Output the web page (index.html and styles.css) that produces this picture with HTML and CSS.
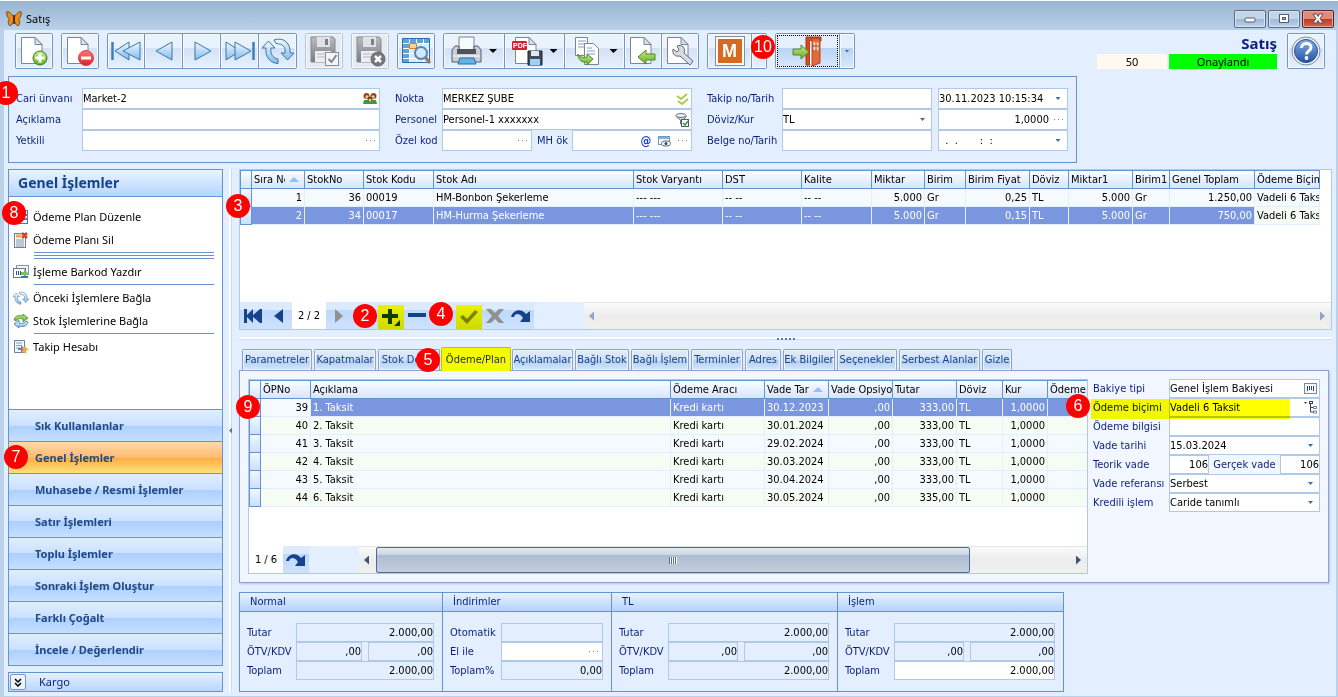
FILE: index.html
```html
<!DOCTYPE html>
<html lang="tr">
<head>
<meta charset="utf-8">
<title>Satış</title>
<link rel="stylesheet" href="styles.css">
</head>
<body>
<svg class="defs" width="0" height="0" aria-hidden="true">
  <defs>
    <linearGradient id="blue" x1="0" y1="0" x2="0" y2="1"><stop offset="0" stop-color="#f2fafe"/><stop offset="1" stop-color="#7fbce8"/></linearGradient>
    <linearGradient id="green" x1="0" y1="0" x2="0" y2="1"><stop offset="0" stop-color="#c5ec85"/><stop offset="1" stop-color="#62ad28"/></linearGradient>
    <linearGradient id="red" x1="0" y1="0" x2="0" y2="1"><stop offset="0" stop-color="#ff7a72"/><stop offset="1" stop-color="#d9202a"/></linearGradient>
    <linearGradient id="grey" x1="0" y1="0" x2="0" y2="1"><stop offset="0" stop-color="#b9bcc2"/><stop offset="1" stop-color="#777b83"/></linearGradient>
    <linearGradient id="orb" x1="0" y1="0" x2="0" y2="1"><stop offset="0" stop-color="#86aee6"/><stop offset="1" stop-color="#2452a5"/></linearGradient>
    <symbol id="page" viewBox="0 0 32 32"><path d="M3.500 2.500H17l7 7v19H3.500z" fill="#fff" stroke="#7d8592"/><path d="M17 2.500v7h7z" fill="#cfe4f8" stroke="#7d8592"/></symbol>
    <symbol id="cycle" viewBox="0 0 32 32"><path d="M4 13H0l6.500-7L13 13H9c-1 6 2 10 7 11v4.500C8 28 3 22 4 13z" fill="url(#blue)" stroke="#3b74ad"/><path d="M28 18h4l-6.500 7L19 18h4c1-6-2-9-9-9.500l-2-3.500C22 1.500 29 9 28 18z" fill="url(#blue)" stroke="#3b74ad"/></symbol>
    <symbol id="floppy" viewBox="0 0 32 32"><path d="M3 2h22l2 2v23H3z" fill="url(#grey)" stroke="#85888e"/><path d="M9 2h13v10H9z" fill="#dfe1e5"/><path d="M17 4h3v6h-3z" fill="#7c8087"/><path d="M7 16h16v11H7z" fill="#eceef1"/><path d="M9 19h12M9 22h12" stroke="#b4b7bd"/></symbol>
    <symbol id="redo" viewBox="0 0 20 16"><path d="M0 9C2 1 11 0 15 6l4-3v11H9l3-4C9 5 4 5 3 9z" fill="#15428b"/></symbol>
  </defs>
</svg>
<div class="window">
  <header class="titlebar">
    <svg class="app-icon" viewBox="0 0 16 16" width="16" height="16" aria-hidden="true"><path d="M7.500 6C5 1 1.500 0 .7 1c0 3 .8 6 2.800 7C1.500 10 2 13 4 15c2-1 3-3 3.500-5z" fill="#ef8d10" stroke="#593010" stroke-width=".8"/><path d="M8.500 6C11 1 14.500 0 15.300 1c0 3-.8 6-2.800 7 2 2 1.500 5-.5 7-2-1-3-3-3.500-5z" fill="#ef8d10" stroke="#593010" stroke-width=".8"/><path d="M8 4v9" stroke="#402010" stroke-width="1.500"/></svg>
    <h1>Satış</h1>
    <div class="window-controls">
      <button aria-label="Küçült"><svg width="14" height="12"><rect x="2" y="5" width="10" height="4" rx="1" fill="#fff" stroke="#555c6b"/></svg></button>
      <button aria-label="Ekranı kapla"><svg width="14" height="12"><rect x="2.500" y="1.500" width="9" height="8" fill="#fff" stroke="#555c6b"/><rect x="5.500" y="4.500" width="3" height="2" fill="#9db6d2" stroke="#555c6b"/></svg></button>
      <button class="close" aria-label="Kapat"><svg width="14" height="12"><path d="M2 1h3.500L7 3.500 8.500 1H12L9 5.500l3 4.500H8.500L7 7.500 5.500 10H2l3-4.500z" fill="#fff" stroke="#5c4a54"/></svg></button>
    </div>
  </header>

  <div class="client">
    <div class="toolbar">
      <div class="group"><button class="tool" aria-label="Yeni"><svg width="32" height="32"><use href="#page"/><circle cx="22" cy="23" r="7" fill="url(#green)" stroke="#3d7d1b"/><path d="M22 18.500v9M17.500 23h9" stroke="#fff" stroke-width="3"/></svg></button></div>
      <div class="group"><button class="tool" aria-label="Sil"><svg width="32" height="32"><use href="#page"/><circle cx="22" cy="23" r="7.500" fill="url(#red)" stroke="#e04040"/><path d="M17 23h10" stroke="#fff" stroke-width="3"/></svg></button></div>
      <div class="group">
        <button class="tool" aria-label="İlk kayıt"><svg width="32" height="32"><path d="M2.500 7v18" stroke="#3f7fb8" stroke-width="2.500"/><path d="M19 7v18L5 16z" fill="url(#blue)" stroke="#3b74ad"/><path d="M30 7v18L13 16z" fill="url(#blue)" stroke="#3b74ad"/></svg></button>
        <button class="tool" aria-label="Önceki kayıt"><svg width="32" height="32"><path d="M24 7v18L8 16z" fill="url(#blue)" stroke="#3b74ad"/></svg></button>
        <button class="tool" aria-label="Sonraki kayıt"><svg width="32" height="32"><path d="M9 7v18l16-9z" fill="url(#blue)" stroke="#3b74ad"/></svg></button>
        <button class="tool" aria-label="Son kayıt"><svg width="32" height="32"><path d="M29.500 7v18" stroke="#3f7fb8" stroke-width="2.500"/><path d="M2 7v18l14-9z" fill="url(#blue)" stroke="#3b74ad"/><path d="M11 7v18l16-9z" fill="url(#blue)" stroke="#3b74ad"/></svg></button>
        <button class="tool" aria-label="Yenile"><svg width="32" height="32"><use href="#cycle"/></svg></button>
      </div>
      <div class="group"><button class="tool off" aria-label="Kaydet"><svg width="32" height="32"><use href="#floppy"/><rect x="17.500" y="17.500" width="13" height="13" fill="#f3f4f6" stroke="#8b8e94"/><path d="M20.500 24l3 3 5-7" fill="none" stroke="#85888e" stroke-width="2"/></svg></button></div>
      <div class="group"><button class="tool off" aria-label="Vazgeç"><svg width="32" height="32"><use href="#floppy"/><circle cx="24" cy="24" r="7" fill="#73767c" stroke="#666a70"/><path d="M21 21l6 6M27 21l-6 6" stroke="#fff" stroke-width="2.500"/></svg></button></div>
      <div class="group"><button class="tool" aria-label="Ara"><svg width="32" height="32"><path d="M2.500 3.500h27v24h-27z" fill="#d5ebfb" stroke="#2d6da9"/><path d="M3 4h6v23H3zM3 4h26v4H3z" fill="#5fa3da"/><path d="M9.500 4v23M16.500 4v23M23.500 4v23M3 8.500h26M3 13.500h26M3 18.500h26M3 23.500h26" stroke="#fff"/><path d="M9.500 8.500h7v5h-7z" fill="#ffd58a" stroke="#c8872e"/><path d="M25 22l5 6" stroke="#a3755a" stroke-width="3"/><circle cx="21" cy="18" r="6" fill="#cfe8fb" stroke="#5b83b5" stroke-width="2"/></svg></button></div>
      <div class="group">
        <button class="tool drop" aria-label="Yazdır"><svg width="32" height="32"><path d="M8 2h15v14H8z" fill="#f7fafd" stroke="#7b8594"/><path d="M4 11h4v5h15v-5h4l3 4v12H1V15z" fill="#c9ced6" stroke="#565c68"/><path d="M6 14h19v5H6z" fill="#4d535d"/><path d="M2 21h27" stroke="#fff"/><path d="M9 23h14l2 6H7z" fill="#62b2ea" stroke="#2b6f9f"/></svg></button>
        <button class="tool drop" aria-label="PDF olarak kaydet"><svg width="32" height="32"><use href="#page"/><rect x="0" y="6" width="15" height="9" rx="1" fill="#cf2430"/><text x="1" y="13" class="pdf">PDF</text><path d="M16 16h14v14H16z" fill="#454a58" stroke="#1c2130"/><path d="M19 16h8v5h-8z" fill="#dfe8f4"/><path d="M18 24h10v6H18z" fill="#9dd0f5"/></svg></button>
        <button class="tool drop" aria-label="Kopyala"><svg width="32" height="32"><path d="M3.500 2.500h12v18h-12z" fill="#fff" stroke="#7d8592"/><path d="M6 6h8M6 9h8M6 12h8" stroke="#7a9fd0"/><path d="M12.500 8.500h9l5 5v16h-14z" fill="#fff" stroke="#7d8592"/><path d="M15 13h5M15 16h8M15 19h8" stroke="#7a9fd0"/><path d="M6 19c2 4 6 4 9 3v-3l6 5-6 6v-3c-5 1-9-2-9-8z" fill="url(#green)" stroke="#4c8b1d"/></svg></button>
        <button class="tool" aria-label="Aktar"><svg width="32" height="32"><use href="#page"/><path d="M11 22l8-7v4h9v6h-9v4z" fill="url(#green)" stroke="#4c8b1d"/></svg></button>
        <button class="tool" aria-label="Ayarlar"><svg width="32" height="32"><use href="#page"/><path d="M9 14l4 3 2-2-2-4c5-2 9 2 7 7l9 8-3 4-10-9c-5 1-8-2-7-7z" fill="#d6dce5" stroke="#5e6672"/></svg></button>
      </div>
      <div class="group module">
        <button class="tool wide" aria-label="Modül"><svg width="32" height="32"><rect x="1.500" y="1.500" width="29" height="29" fill="#fff" stroke="#8c8c8c"/><rect x="4" y="4" width="24" height="24" fill="#d9691f"/><text x="8" y="22" class="m">M</text></svg></button>
        <button class="slim" aria-label="Modül seçenekleri"></button>
        <span class="badge b10">10</span>
      </div>
      <div class="group exit">
        <button class="tool" aria-label="Çıkış"><svg width="32" height="32"><path d="M14 2h15v4H18v24h-4z" fill="#d94a20" stroke="#a03414"/><path d="M18 6h4v22l-4 2z" fill="#fff"/><path d="M20 3l8 1v24l-8 3z" fill="#e06a3c" stroke="#b2421d"/><path d="M21.500 7l5 .5v8l-5-.5z" fill="#f8e2cb"/><path d="M24 7v9M21 11h6" stroke="#b2421d"/><path d="M1 14h8v-4l8 7-8 7v-4H1z" fill="url(#green)" stroke="#55852c"/></svg></button>
        <button class="slim caret" aria-label="Çıkış seçenekleri"></button>
      </div>
      <div class="status">
        <strong>Satış</strong>
        <div class="state"><span class="code">50</span><span class="ok">Onaylandı</span></div>
      </div>
      <div class="group"><button class="tool" aria-label="Yardım"><svg width="32" height="32"><circle cx="16" cy="16" r="14" fill="#edf3fb" stroke="#7c8ba6"/><circle cx="16" cy="16" r="11.500" fill="url(#orb)" stroke="#254f96"/><path d="M11.500 13c0-6 9.500-6 9.500-.5 0 3.500-4.500 3.500-4.500 7" fill="none" stroke="#fff" stroke-width="3"/><circle cx="16.500" cy="23" r="1.900" fill="#fff"/></svg></button></div>
    </div>

    <form class="head-form">
      <span class="badge b1">1</span>
      <div class="block account">
        <label for="cari">Cari ünvanı</label>
        <div class="field"><input id="cari" value="Market-2"><button type="button" aria-label="Cari seç"><svg width="14" height="13"><path d="M0 12l1-4h12l1 4z" fill="#3f9a3a"/><circle cx="3.500" cy="4" r="3" fill="#8a4a1f"/><circle cx="10.500" cy="4" r="3" fill="#8a4a1f"/><circle cx="4" cy="5" r="1.700" fill="#f3c79b"/><circle cx="10" cy="5" r="1.700" fill="#f3c79b"/><circle cx="7" cy="7" r="2.500" fill="#713a17"/><circle cx="7" cy="8" r="1.500" fill="#f3c79b"/></svg></button></div>
        <label for="aciklama">Açıklama</label>
        <div class="field"><input id="aciklama"></div>
        <label for="yetkili">Yetkili</label>
        <div class="field"><input id="yetkili"><button type="button" class="dots" aria-label="Yetkili seç"></button></div>
      </div>
      <div class="block place">
        <label for="nokta">Nokta</label>
        <div class="field"><input id="nokta" value="MERKEZ ŞUBE"><button type="button" aria-label="Nokta seç"><svg width="13" height="14"><path d="M1 4l4 3 6-5M2 9l4 3 6-5" fill="none" stroke="#a7cf4b" stroke-width="2"/></svg></button></div>
        <label for="personel">Personel</label>
        <div class="field"><input id="personel" value="Personel-1 xxxxxxx"><button type="button" aria-label="Personel seç"><svg width="14" height="14"><path d="M.5 3l5 4v4l3 1V7l3-4" fill="#d4d8de" stroke="#6b717c"/><ellipse cx="6" cy="2.500" rx="5" ry="2" fill="#eef0f3" stroke="#6b717c"/><rect x="6.500" y="6.500" width="7" height="7" fill="#fff" stroke="#4e5a6d"/><path d="M8 10l2 2 3-4" fill="none" stroke="#35a035" stroke-width="1.500"/></svg></button></div>
        <label for="ozel">Özel kod</label>
        <div class="split">
          <div class="field"><input id="ozel"><button type="button" class="dots" aria-label="Özel kod seç"></button></div>
          <label for="mh">MH ök</label>
          <div class="field grow"><input id="mh"><button type="button" class="at" aria-label="E-posta">@</button><button type="button" aria-label="Göster"><svg width="13" height="12"><rect x=".5" y="1.500" width="11" height="8" fill="#f1f7fd" stroke="#7595bd"/><path d="M1 2h10v2H1z" fill="#7fb2e4"/><ellipse cx="8" cy="8.500" rx="4.500" ry="2.500" fill="#fff" stroke="#5b6475"/><circle cx="8" cy="8.500" r="1.500" fill="#38445c"/></svg></button><button type="button" class="dots" aria-label="MH ök seç"></button></div>
        </div>
      </div>
      <div class="block doc">
        <label for="takip">Takip no/Tarih</label>
        <div class="field"><input id="takip"></div>
        <div class="field"><input id="tarih" aria-label="Tarih" value="30.11.2023 10:15:34"><button type="button" class="caret" aria-label="Tarih seç"></button></div>
        <label for="doviz">Döviz/Kur</label>
        <div class="field caret"><select id="doviz"><option>TL</option></select></div>
        <div class="field num"><input id="kur" aria-label="Kur" value="1,0000"><button type="button" class="dots" aria-label="Kur seç"></button></div>
        <label for="belge">Belge no/Tarih</label>
        <div class="field"><input id="belge"></div>
        <div class="field"><input id="belge-tarih" aria-label="Belge tarihi" value="  .  .       :  :"><button type="button" class="caret" aria-label="Belge tarihi seç"></button></div>
      </div>
    </form>

    <div class="workspace">
      <aside class="sidebar">
        <div class="nav-panel">
          <h2>Genel İşlemler</h2>
          <span class="badge b8">8</span>
          <div class="links">
            <a href="#"><svg width="16" height="16"><rect x="1.500" y="1.500" width="13" height="13" fill="#eef5fd" stroke="#5278a8"/><path d="M2 6h12M2 10h12" stroke="#4a80c4" stroke-width="2"/></svg>Ödeme Plan Düzenle</a>
            <a href="#"><svg width="16" height="16"><rect x="1.500" y="1.500" width="11" height="14" fill="#f5f8fc" stroke="#6c7fa0"/><path d="M3 4h5" stroke="#f3a64d" stroke-width="3"/><path d="M3 8h8M3 10h8M3 12h8M3 14h8" stroke="#8794ab"/><path d="M9 1l5 5M14 1l-5 5" stroke="#d0462c" stroke-width="2.500"/></svg>Ödeme Planı Sil</a>
            <hr class="double">
            <a href="#"><svg width="16" height="16"><rect x="3.500" y="1.500" width="12" height="9" fill="#f3f7fc" stroke="#8596b4"/><rect x=".5" y="4.500" width="12" height="9" fill="#fff" stroke="#6178a0"/><path d="M3.500 7v4M5.500 7v4M7.500 7v4" stroke="#334f80"/><path d="M8 8h3V5l4 4-4 5v-3H8z" fill="#7cc14e"/><path d="M8 13h7" stroke="#3974bd" stroke-width="2"/></svg>İşleme Barkod Yazdır</a>
            <hr>
            <a href="#"><svg width="16" height="16"><use href="#cycle"/></svg>Önceki İşlemlere Bağla</a>
            <a href="#"><svg width="16" height="16"><path d="M1 7c1-5 6-5 9-4V1l5 4-5 4V6C6 5 4 6 3 8z" fill="url(#green)" stroke="#4a8a2a" stroke-width=".8"/><path d="M15 9c-1 5-6 5-9 4v2l-5-4 5-4v3c4 1 6 0 7-2z" fill="url(#blue)" stroke="#3b74ad" stroke-width=".8"/></svg>Stok İşlemlerine Bağla</a>
            <hr>
            <a href="#"><svg width="16" height="16"><path d="M1.500 1.500h10v12h-10z" fill="#f3f7fc" stroke="#6c7fa0"/><path d="M3 4h6M3 6.500h6M3 9h4" stroke="#7ea2d2"/><path d="M5 9h3V6l4 4-4 4v-3H5z" fill="#6d7f9b"/><path d="M12 6l1 3 3 1-3 2 1 3-3-2-2 2 1-4-1-2h2z" fill="#f6aa3c"/></svg>Takip Hesabı</a>
          </div>
          <nav>
            <button>Sık Kullanılanlar</button>
            <button class="active">Genel İşlemler<span class="badge b7">7</span></button>
            <button>Muhasebe / Resmi İşlemler</button>
            <button>Satır İşlemleri</button>
            <button>Toplu İşlemler</button>
            <button>Sonraki İşlem Oluştur</button>
            <button>Farklı Çoğalt</button>
            <button>İncele / Değerlendir</button>
          </nav>
        </div>
        <div class="cargo"><button aria-label="Kargo panelini aç"><svg width="8" height="9"><path d="M1 1l3 3 3-3M1 5l3 3 3-3" fill="none" stroke="#000" stroke-width="1.500"/></svg></button>Kargo</div>
      </aside>
      <div class="v-split"></div>

      <main>
        <section class="grid stock">
          <span class="badge b3">3</span>
          <div class="grid-body">
            <table>
              <colgroup><col><col><col><col><col><col><col><col><col><col><col><col><col><col><col><col></colgroup>
              <thead><tr><th></th><th><div class="sort"><span>Sıra No</span></div></th><th>StokNo</th><th>Stok Kodu</th><th>Stok Adı</th><th>Stok Varyantı</th><th>DST</th><th>Kalite</th><th>Miktar</th><th>Birim</th><th>Birim Fiyat</th><th>Döviz</th><th>Miktar1</th><th>Birim1</th><th>Genel Toplam</th><th>Ödeme Biçimi</th></tr></thead>
              <tbody>
                <tr><td></td><td class="r">1</td><td class="r">36</td><td>00019</td><td>HM-Bonbon Şekerleme</td><td>--- ---</td><td>-- --</td><td>-- --</td><td class="r">5.000</td><td>Gr</td><td class="r">0,25</td><td>TL</td><td class="r">5.000</td><td>Gr</td><td class="r">1.250,00</td><td>Vadeli 6 Taksit</td></tr>
                <tr class="sel"><td></td><td class="r">2</td><td class="r">34</td><td>00017</td><td>HM-Hurma Şekerleme</td><td>--- ---</td><td>-- --</td><td>-- --</td><td class="r">5.000</td><td>Gr</td><td class="r">0,15</td><td>TL</td><td class="r">5.000</td><td>Gr</td><td class="r">750,00</td><td class="focus">Vadeli 6 Taksit</td></tr>
              </tbody>
            </table>
          </div>
          <div class="navigator">
            <button aria-label="İlk"><svg width="20" height="16"><path d="M1 1h3v6l6-6v6l7-6h2v14h-2l-7-6v6L4 9v6H1z" fill="#15428b"/></svg></button>
            <button aria-label="Önceki"><svg width="20" height="16"><path d="M14 1v14L5 8z" fill="#15428b"/></svg></button>
            <span class="count">2 / 2</span>
            <button aria-label="Sonraki"><svg width="20" height="16"><path d="M6 1v14l8-7z" fill="#8f9192"/></svg></button>
            <span class="gap"></span>
            <button class="mark" aria-label="Ekle"><svg width="20" height="18"><path d="M7 1h4v5h6v4h-6v6H7v-6H1V6h6zM19 12v6h-6z" fill="#15428b"/></svg></button>
            <button aria-label="Çıkar"><svg width="20" height="16"><path d="M1 5h18v4H1z" fill="#15428b"/></svg></button>
            <span class="gap"></span>
            <button class="mark" aria-label="Onayla"><svg width="20" height="16"><path d="M1 8l3-2 4 4 8-9 3 2L8 15z" fill="#8f9192"/></svg></button>
            <button aria-label="Vazgeç"><svg width="20" height="16"><path d="M1 1h5l4 4 4-4h5l-6 7 6 7h-5l-4-4-4 4H1l6-7z" fill="#8f9192"/></svg></button>
            <button aria-label="Yenile"><svg width="20" height="16"><use href="#redo"/></svg></button>
            <span class="badge b2">2</span><span class="badge b4">4</span>
            <div class="scroll idle"><i class="arrow left"></i><i class="arrow right"></i></div>
          </div>
        </section>
        <div class="h-split"></div>

        <div class="tabs" role="tablist">
          <button role="tab">Parametreler</button><button role="tab">Kapatmalar</button><button role="tab">Stok Detay</button><button role="tab" class="active" aria-selected="true">Ödeme/Plan<span class="badge b5">5</span></button><button role="tab">Açıklamalar</button><button role="tab">Bağlı Stok</button><button role="tab">Bağlı İşlem</button><button role="tab">Terminler</button><button role="tab">Adres</button><button role="tab">Ek Bilgiler</button><button role="tab">Seçenekler</button><button role="tab">Serbest Alanlar</button><button role="tab">Gizle</button>
        </div>
        <section class="tab-page">
          <div class="grid plan">
            <span class="badge b9">9</span>
            <div class="grid-body">
              <table>
                <colgroup><col><col><col><col><col><col><col><col><col><col></colgroup>
                <thead><tr><th></th><th>ÖPNo</th><th>Açıklama</th><th>Ödeme Aracı</th><th><div class="sort"><span>Vade Tarihi</span></div></th><th>Vade Opsiyonu</th><th>Tutar</th><th>Döviz</th><th>Kur</th><th>Ödeme Tipi</th></tr></thead>
                <tbody>
                  <tr class="sel"><td></td><td class="r focus">39</td><td>1. Taksit</td><td>Kredi kartı</td><td>30.12.2023</td><td class="r">,00</td><td class="r">333,00</td><td>TL</td><td class="r">1,0000</td><td></td></tr>
                  <tr><td></td><td class="r">40</td><td>2. Taksit</td><td>Kredi kartı</td><td>30.01.2024</td><td class="r">,00</td><td class="r">333,00</td><td>TL</td><td class="r">1,0000</td><td></td></tr>
                  <tr><td></td><td class="r">41</td><td>3. Taksit</td><td>Kredi kartı</td><td>29.02.2024</td><td class="r">,00</td><td class="r">333,00</td><td>TL</td><td class="r">1,0000</td><td></td></tr>
                  <tr><td></td><td class="r">42</td><td>4. Taksit</td><td>Kredi kartı</td><td>30.03.2024</td><td class="r">,00</td><td class="r">333,00</td><td>TL</td><td class="r">1,0000</td><td></td></tr>
                  <tr><td></td><td class="r">43</td><td>5. Taksit</td><td>Kredi kartı</td><td>30.04.2024</td><td class="r">,00</td><td class="r">333,00</td><td>TL</td><td class="r">1,0000</td><td></td></tr>
                  <tr><td></td><td class="r">44</td><td>6. Taksit</td><td>Kredi kartı</td><td>30.05.2024</td><td class="r">,00</td><td class="r">335,00</td><td>TL</td><td class="r">1,0000</td><td></td></tr>
                </tbody>
              </table>
            </div>
            <div class="navigator">
              <span class="count">1 / 6</span>
              <button aria-label="Yenile"><svg width="20" height="16"><use href="#redo"/></svg></button>
              <div class="scroll"><i class="arrow left"></i><div class="thumb"></div><i class="arrow right"></i></div>
            </div>
          </div>
          <form class="pay-form">
            <span class="badge b6">6</span>
            <label for="bakiye">Bakiye tipi</label>
            <div class="field"><input id="bakiye" value="Genel İşlem Bakiyesi"><button type="button" aria-label="Bakiye seç"><svg width="13" height="11"><rect x=".5" y=".5" width="12" height="10" fill="#f7f9fd" stroke="#7388b5"/><path d="M3.500 3v5M5.500 3v4M7.500 3v4M9.500 3v5" stroke="#33415f"/></svg></button></div>
            <label for="bicim">Ödeme biçimi</label>
            <div class="field"><input id="bicim" value="Vadeli 6 Taksit"><button type="button" aria-label="Biçim seç"><svg width="14" height="13"><path d="M0 1h3L1.500 3z" fill="#33415f"/><path d="M6.500 2v9h3M6.500 6.500h3" fill="none" stroke="#33415f"/><rect x="5.500" y=".5" width="3" height="2" fill="#fff" stroke="#33415f"/><rect x="9.500" y="5.500" width="3" height="2" fill="#fff" stroke="#7b86a0"/><rect x="9.500" y="10" width="3" height="2" fill="#fff" stroke="#7b86a0"/></svg></button></div>
            <label for="bilgi">Ödeme bilgisi</label>
            <div class="field"><input id="bilgi"></div>
            <label for="vade">Vade tarihi</label>
            <div class="field"><input id="vade" value="15.03.2024"><button type="button" class="caret" aria-label="Vade seç"></button></div>
            <label for="teorik">Teorik vade</label>
            <div class="split">
              <div class="field num"><input id="teorik" value="106"></div>
              <label for="gercek">Gerçek vade</label>
              <div class="field num"><input id="gercek" value="106"></div>
            </div>
            <label for="referans">Vade referansı</label>
            <div class="field caret"><select id="referans"><option>Serbest</option></select></div>
            <label for="kredili">Kredili işlem</label>
            <div class="field caret"><select id="kredili"><option>Caride tanımlı</option></select></div>
            <div class="marker"></div>
          </form>
        </section>

        <section class="totals">
          <fieldset class="t1"><legend>Normal</legend><div class="rows">
            <label for="n1">Tutar</label><div class="field ro num"><input id="n1" readonly value="2.000,00"></div>
            <label for="n2">ÖTV/KDV</label><div class="pair"><div class="field ro num"><input id="n2" readonly value=",00"></div><div class="field ro num"><input aria-label="KDV" readonly value=",00"></div></div>
            <label for="n3">Toplam</label><div class="field ro num"><input id="n3" readonly value="2.000,00"></div></div>
          </fieldset>
          <fieldset class="t2"><legend>İndirimler</legend><div class="rows">
            <label for="i1">Otomatik</label><div class="field ro num"><input id="i1" readonly></div>
            <label for="i2">El ile</label><div class="field num"><input id="i2"><button type="button" class="dots" aria-label="İndirim seç"></button></div>
            <label for="i3">Toplam%</label><div class="field ro num"><input id="i3" readonly value="0,00"></div></div>
          </fieldset>
          <fieldset class="t3"><legend>TL</legend><div class="rows">
            <label for="l1">Tutar</label><div class="field ro num"><input id="l1" readonly value="2.000,00"></div>
            <label for="l2">ÖTV/KDV</label><div class="pair"><div class="field ro num"><input id="l2" readonly value=",00"></div><div class="field ro num"><input aria-label="KDV" readonly value=",00"></div></div>
            <label for="l3">Toplam</label><div class="field ro num"><input id="l3" readonly value="2.000,00"></div></div>
          </fieldset>
          <fieldset class="t3"><legend>İşlem</legend><div class="rows">
            <label for="s1">Tutar</label><div class="field ro num"><input id="s1" readonly value="2.000,00"></div>
            <label for="s2">ÖTV/KDV</label><div class="pair"><div class="field ro num"><input id="s2" readonly value=",00"></div><div class="field ro num"><input aria-label="KDV" readonly value=",00"></div></div>
            <label for="s3">Toplam</label><div class="field num"><input id="s3" value="2.000,00"></div></div>
          </fieldset>
        </section>
      </main>
    </div>
  </div>
</div>
</body>
</html>
```
FILE: styles.css
```css
:root {
  --line: #6593cf;
  --soft: #b1c9e8;
  --bg: #e3efff;
  --navy: #0b1f7c;
  --ui: "DejaVu Sans Condensed", "Noto Sans", sans-serif;
  --segoe: "Noto Sans", "Open Sans", sans-serif;
}
* { box-sizing: border-box; }
body { margin: 0; font: 11px/14px var(--ui); color: #000; background: #b9d1ea; }
button, input, select { font: inherit; color: inherit; margin: 0; padding: 0; border: 0; background: none; min-width: 0; }
button { display: flex; align-items: center; justify-content: center; }
.defs { position: absolute; }

.window { min-height: 100vh; display: flex; flex-direction: column; border-top: 1px solid #fff; padding: 0 2px 1px 4px; background: linear-gradient(#98b4d0, #b9d1ea 29px); }
.titlebar { height: 29px; display: flex; align-items: center; gap: 4px; padding: 7px 2px 0; }
.titlebar h1 { flex: 1; margin: 0; font: 11px/16px var(--segoe); }
.window-controls { display: flex; gap: 2px; }
.window-controls button { width: 32px; height: 18px; border: 1px solid #5b6b82; border-radius: 2px; box-shadow: inset 0 0 0 1px #d5e4f3; background: linear-gradient(#c3d5e8 50%, #9db8d6 50%, #bcd2e8); }
.window-controls .close { border-color: #5a2222; box-shadow: inset 0 0 0 1px #e8a79b; background: linear-gradient(#dd8b7c 50%, #b93a22 50%, #cf6a4c); }

.client { flex: 1; display: flex; flex-direction: column; background: var(--bg); padding: 3px 4px 4px; }
.toolbar { display: flex; gap: 8px; padding: 0 7px; }
.group { display: flex; position: relative; border: 1px solid #7795c0; border-radius: 2px; height: 36px; }
.group button { height: 34px; background: linear-gradient(#eaf2fd 40%, #d2e1f5 40%, #e6f0fc); box-shadow: inset 0 0 0 1px #f4f9ff; }
.group button + button { border-left: 1px solid #7795c0; }
.tool { width: 36px; }
.tool + .tool { width: 38px; }
.drop + .tool, .drop + .tool + .tool { width: 37px; }
.group .tool.off { background: #e5ebf3; }
.group:has(.off) { border-color: #b8c4d4; }
.group .tool.drop { width: 60px; gap: 6px; }
.tool.drop::after { content: ""; width: 8px; height: 4px; background: #000; clip-path: polygon(0 0, 100% 0, 50% 100%); }
.wide { width: 43px; }
.slim { width: 15px; }
.exit button { background: linear-gradient(#e5effc 40%, #b9d3f2 40%, #d8e9fc); }
.exit .tool { width: 63px; outline: 1px dotted #000; outline-offset: -2px; }
.pdf { font: bold 7px "Liberation Sans", sans-serif; fill: #fff; }
.m { font: bold 18px "Liberation Sans", sans-serif; fill: #fff; }
.status { flex: 1; display: flex; flex-direction: column; align-items: flex-end; font-family: var(--segoe); margin-right: 2px; }
.status strong { font-size: 15px; line-height: 21px; color: #0b1f7c; }
.state { display: flex; gap: 2px; text-align: center; line-height: 15px; }
.code { width: 70px; background: #fff9f0; }
.ok { width: 108px; background: #0f0; }

.caret::after { content: ""; width: 5px; height: 3px; background: #3f6ba5; clip-path: polygon(0 0, 100% 0, 50% 100%); }
.dots::after { content: ""; width: 9px; height: 1px; background: repeating-linear-gradient(90deg, #6d84a8 0 1px, transparent 1px 4px); }

.head-form { position: relative; align-self: flex-start; display: flex; gap: 15px; margin-top: 7px; padding: 11px 8px 11px 7px; border: 1px solid var(--line); }
.block { display: grid; grid-auto-rows: 21px; align-items: stretch; }
.account { grid-template-columns: 66px 298px; }
.place { grid-template-columns: 47px 250px; }
.doc { grid-template-columns: 75px 150px 6px 130px; }
.doc > :nth-child(3n) { grid-column: 4; }
label { color: var(--navy); align-self: center; white-space: nowrap; }
.field { display: flex; align-items: center; min-width: 0; border: 1px solid var(--soft); background: #fff; }
.field input, .field select { flex: 1; width: 0; height: 100%; appearance: none; outline: 0; white-space: pre; }
.field button { height: 100%; width: 18px; flex: none; }
.field.caret::after { margin-right: 6px; }
.num input { text-align: right; }
.split { display: flex; min-width: 0; }
.place .split .field { width: 90px; }
.place .split label { width: 40px; padding-left: 5px; }
.place .split .grow { width: auto; flex: 1; }
.field .at { color: #1c3fd4; font-weight: bold; font-size: 12px; }

.workspace { flex: 1; display: flex; margin-top: 6px; }
.sidebar { width: 215px; display: flex; flex-direction: column; gap: 6px; font-family: var(--segoe); }
.nav-panel { flex: 1; position: relative; display: flex; flex-direction: column; border: 1px solid var(--line); background: #fff; }
.nav-panel h2 { margin: 0; padding: 0 9px; font-size: 14px; line-height: 26px; color: #15428b; background: linear-gradient(#eaf3ff, #b5d6ff); border-bottom: 1px solid var(--line); }
.links { flex: 1; display: flex; flex-direction: column; padding: 8px 8px 8px 4px; }
.links a { display: flex; align-items: center; gap: 4px; height: 23px; color: #000; text-decoration: none; white-space: nowrap; }
.links hr { width: 180px; margin: 1px 0 1px 21px; border: 0; border-top: 1px solid var(--line); height: 1px; }
.links .double { height: 7px; margin-top: 1px; border-bottom: 1px solid var(--line); background: linear-gradient(transparent 2px, var(--line) 2px 3px, transparent 3px); }
nav { display: flex; flex-direction: column; }
nav button { position: relative; height: 32px; justify-content: flex-start; padding-left: 26px; font-weight: bold; color: #1e4a87; border-top: 1px solid var(--line); background: linear-gradient(#e0eeff, #cbe1ff 50%, #adceff 50%, #c4dfff); }
nav .active { background: linear-gradient(#ffd9aa, #ffbb6e 50%, #ffab3f 50%, #fee17a); }
.cargo { display: flex; align-items: center; gap: 13px; height: 20px; border: 1px solid var(--line); padding-left: 1px; color: var(--navy); background: linear-gradient(#e7f1ff, #b7d6ff); }
.cargo button { width: 16px; height: 16px; border: 1px solid #7795c0; border-radius: 2px; background: #edf4fd; }
.v-split { width: 16px; display: flex; align-items: center; background: linear-gradient(90deg, transparent 6px, #fff 6px 8px, #c3dbf9 8px 9px, transparent 9px); }
.v-split::after { content: ""; width: 3px; height: 6px; margin-left: 6px; background: #4c7cb8; clip-path: polygon(100% 0, 100% 100%, 0 50%); }
main { flex: 1; min-width: 0; display: flex; flex-direction: column; }

.grid { position: relative; display: flex; flex-direction: column; border: 1px solid var(--soft); background: #fff; }
.stock { flex: 1; }
.grid-body { flex: 1; overflow: hidden; }
table { table-layout: fixed; border-collapse: separate; border-spacing: 0; }
.stock table { width: 1080px; }
.plan table { width: 869px; }
th, td { height: 18px; padding: 0 2px; overflow: hidden; white-space: nowrap; text-align: left; font-weight: normal; border-right: 1px solid var(--bg); border-bottom: 1px solid var(--bg); line-height: 15px; }
th { height: 19px; border-color: var(--line); border-top: 1px solid var(--line); background: linear-gradient(#fafcff, #d5e6ff); }
th:first-child, tbody td:first-child { border-left: 1px solid var(--line); }
tbody tr td { background: #f5faff; }
tbody tr:nth-child(even) td { background: #f5fcf3; }
tbody tr td:first-child, tbody tr:nth-child(even) td:first-child { background: linear-gradient(#f2f7ff, #c9dffd); border-color: var(--line); }
tbody tr.sel td:not(.focus, :first-child) { background: #7a96df; color: #fff; }
.r { text-align: right; }
.sort { display: flex; align-items: center; justify-content: space-between; gap: 4px; padding-right: 3px; }
.sort span { flex: 1; min-width: 0; overflow: hidden; }
.sort::after { content: ""; flex: none; width: 10px; height: 5px; background: #8fc0fb; clip-path: polygon(50% 0, 100% 100%, 0 100%); }
.stock col:nth-child(1) { width: 12px; }
.stock col:nth-child(2) { width: 53px; }
.stock col:nth-child(3) { width: 59px; }
.stock col:nth-child(4) { width: 70px; }
.stock col:nth-child(5) { width: 200px; }
.stock col:nth-child(6) { width: 89px; }
.stock col:nth-child(7) { width: 79px; }
.stock col:nth-child(8) { width: 70px; }
.stock col:nth-child(9) { width: 53px; }
.stock col:nth-child(10) { width: 41px; }
.stock col:nth-child(11) { width: 64px; }
.stock col:nth-child(12) { width: 39px; }
.stock col:nth-child(13) { width: 64px; }
.stock col:nth-child(14) { width: 37px; }
.stock col:nth-child(15) { width: 85px; }
.stock col:nth-child(16) { width: 65px; }
.plan col:nth-child(1) { width: 12px; }
.plan col:nth-child(2) { width: 50px; }
.plan col:nth-child(3) { width: 360px; }
.plan col:nth-child(4) { width: 94px; }
.plan col:nth-child(5), .plan col:nth-child(6), .plan col:nth-child(7) { width: 64px; }
.plan col:nth-child(8) { width: 46px; }
.plan col:nth-child(9) { width: 45px; }
.plan col:nth-child(10) { width: 70px; }

.navigator { position: relative; display: flex; height: 27px; background: var(--bg); }
.navigator > button, .gap { width: 26px; background: linear-gradient(#dceafd 30%, #bdd8fa 30%, #cfe2fc); }
.navigator > .mark { background: linear-gradient(#e9f200, #d0d900); border-top: 3px solid #dceafd; }
.navigator > .mark svg { mix-blend-mode: multiply; }
.count { width: 34px; line-height: 27px; text-align: center; background: #fff; }
.scroll { flex: 1; display: flex; align-items: center; margin-left: 50px; background: linear-gradient(#fbfbfb, #ececec 50%, #f0f0f0); border-top: 1px solid #e4e4e4; }
.arrow { width: 17px; height: 9px; flex: none; background: #3f5478; clip-path: polygon(5px 50%, 10px 0, 10px 100%); }
.arrow.right { margin-left: auto; clip-path: polygon(6px 0, 11px 50%, 6px 100%); }
.idle .arrow { background: #8fa4c8; }
.thumb { width: 594px; height: 26px; display: flex; align-items: center; justify-content: center; border: 1px solid #54688f; border-radius: 2px; background: linear-gradient(#e2e8f0, #ccd6e3 28%, #adbdd2 30%, #c3cedd); }
.thumb::after { content: ""; width: 8px; height: 7px; background: repeating-linear-gradient(90deg, #5a6d8d 0 1px, #fff 1px 2px); }
.h-split { height: 17px; display: flex; justify-content: center; align-items: center; background: linear-gradient(transparent 7px, #fff 7px 9px, #c5ddfb 9px 10px, transparent 10px); }
.h-split::after { content: ""; width: 18px; height: 2px; background: repeating-linear-gradient(90deg, #4c7cb8 0 2px, transparent 2px 4px); }

.tabs { display: flex; align-items: flex-end; gap: 2px; height: 23px; padding: 0 3px; }
.tabs button { position: relative; flex: none; height: 21px; color: #15428b; border: 1px solid #8ba3cc; border-bottom: 0; border-radius: 2px 2px 0 0; background: linear-gradient(#e3edfa, #cfe0f5 50%, #b4d0f3 55%, #d5e6fa); box-shadow: inset 0 0 0 1px #edf4fd; white-space: nowrap; }
.tabs .active { height: 24px; margin: 0 -1px -1px; z-index: 1; color: #1d2b33; background: #f6fa00; border-color: #b9c400; box-shadow: none; }
.tabs > :nth-child(1) { width: 70px; }
.tabs > :nth-child(2) { width: 62px; }
.tabs > :nth-child(3) { width: 62px; }
.tabs > :nth-child(4) { width: 70px; }
.tabs > :nth-child(5) { width: 61px; }
.tabs > :nth-child(6) { width: 54px; }
.tabs > :nth-child(7) { width: 58px; }
.tabs > :nth-child(8) { width: 52px; }
.tabs > :nth-child(9) { width: 36px; }
.tabs > :nth-child(10) { width: 52px; }
.tabs > :nth-child(11) { width: 60px; }
.tabs > :nth-child(12) { width: 81px; }
.tabs > :nth-child(13) { width: 30px; }
.tab-page { display: flex; gap: 5px; margin-right: 3px; padding: 8px; border: 1px solid #8ba3cc; background: #f2f7ff; min-height: 213px; box-shadow: 1px 1px 2px #b3c7e2; }
.plan { flex: 1; min-width: 0; }
.pay-form { position: relative; width: 227px; display: grid; grid-template-columns: 76px 1fr; grid-auto-rows: 19px; align-content: start; }
.pay-form .split .num { width: 40px; }
.pay-form .split label { flex: 1; text-align: center; }
.pay-form .field button { width: 17px; }
.marker { position: absolute; left: -2px; top: 20px; width: 199px; height: 20px; background: #ff0; mix-blend-mode: multiply; pointer-events: none; }

.totals { display: flex; align-self: flex-start; margin-top: 9px; border: 1px solid var(--line); }
fieldset { margin: 0; padding: 0; border: 0; min-width: 0; }
fieldset + fieldset { border-left: 1px solid var(--line); }
legend { float: left; width: 100%; padding: 0 10px; line-height: 18px; color: var(--navy); border-bottom: 1px solid var(--line); background: linear-gradient(#e8f2ff, #b3d3ff); }
.rows { clear: both; display: grid; grid-auto-rows: 19px; padding: 11px 8px 11px 7px; }
.t1 { width: 202px; }
.t2 { width: 169px; }
.t3 { width: 226px; }
.t1 .rows, .t3 .rows { grid-template-columns: 49px 1fr; }
.t2 .rows { grid-template-columns: 51px 1fr; }
.pair { display: grid; grid-template-columns: 66px 1fr; gap: 6px; }
.t3 .pair { grid-template-columns: 70px 1fr; }
.ro { background: var(--bg); }

.badge { position: absolute; z-index: 5; width: 24px; height: 24px; border-radius: 50%; background: #f00; color: #fff; font: 16px/24px "Liberation Sans", sans-serif; text-align: center; }
.b1 { left: -15px; top: 4px; }
.b2 { left: 113px; top: 2px; }
.b3 { left: -14px; top: 24px; }
.b4 { left: 189px; top: 0; }
.b5 { left: -26px; top: 0; }
.b6 { left: -27px; top: 15px; }
.b7 { left: -5px; top: 3px; }
.b8 { left: -7px; top: 31px; }
.b9 { left: -13px; top: 15px; }
.b10 { left: 43px; top: 1px; }
```
